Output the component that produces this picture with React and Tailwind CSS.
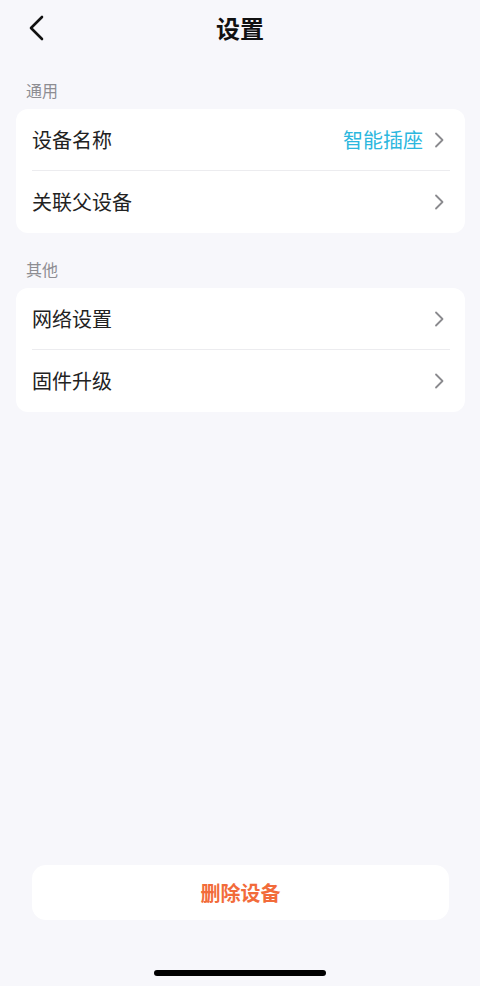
const font = { fontFamily: '"Noto Sans CJK SC", "Noto Sans", sans-serif' };

function Chevron() {
  return (
    <svg width="12" height="18" viewBox="0 0 12 18" className="shrink-0">
      <path d="M3 2.5 L9.5 9 L3 15.5" fill="none" stroke="#8a8a8e" strokeWidth="1.8" strokeLinecap="round" strokeLinejoin="round" />
    </svg>
  );
}

function Row({ label, value, last }) {
  return (
    <div className="relative flex h-[62px] items-center justify-between pl-4 pr-[20px]">
      <span className="text-[20px] text-[#222]">{label}</span>
      <div className="flex items-center gap-[10px]">
        {value && <span className="text-[20px] text-[#2cb7de]">{value}</span>}
        <Chevron />
      </div>
      {!last && <div className="absolute bottom-0 left-4 right-[15px] h-px bg-[#ececef]" />}
    </div>
  );
}

function Section({ title, rows }) {
  return (
    <div>
      <div className="px-[26px] pb-[7px] text-[16px] text-[#8d8d92]">{title}</div>
      <div className="ml-4 mr-[15px] rounded-xl bg-white">
        {rows.map((r, i) => (
          <Row key={r.label} {...r} last={i === rows.length - 1} />
        ))}
      </div>
    </div>
  );
}

export default function App() {
  return (
    <div className="flex h-[986px] w-[480px] flex-col bg-[#f7f7fb]" style={font}>
      <header className="relative flex h-[56px] items-center justify-center">
        <svg className="absolute left-[27px] top-[15px]" width="20" height="26" viewBox="0 0 20 26">
          <path d="M15 2 L4 13 L15 24" fill="none" stroke="#111" strokeWidth="2.6" strokeLinecap="round" strokeLinejoin="round" />
        </svg>
        <h1 className="text-[24px] font-bold text-[#111]">设置</h1>
      </header>

      <div className="mt-[22px] flex flex-col gap-[24px]">
        <Section
          title="通用"
          rows={[{ label: "设备名称", value: "智能插座" }, { label: "关联父设备" }]}
        />
        <Section title="其他" rows={[{ label: "网络设置" }, { label: "固件升级" }]} />
      </div>

      <div className="flex-1" />

      <button className="ml-8 mr-[31px] flex h-[55px] items-center justify-center rounded-[14px] bg-white text-[20px] font-bold text-[#f26b3a]">
        删除设备
      </button>

      <div className="flex h-[66px] items-end justify-center pb-[10px]">
        <div className="h-[6px] w-[172px] rounded-full bg-black" />
      </div>
    </div>
  );
}
